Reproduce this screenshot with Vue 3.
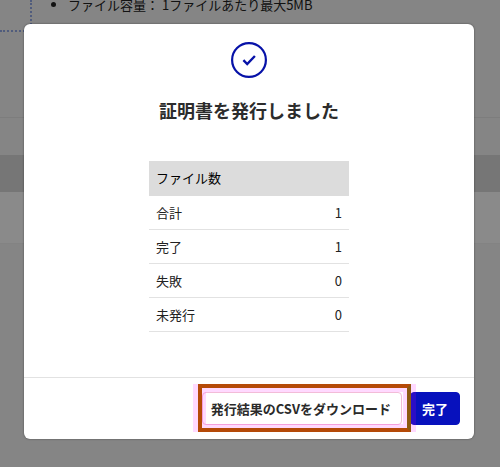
<script setup>
import {ref} from 'vue';

const title = ref('証明書を発行しました');
const isOpen = ref(true);
const rows = ref([
  {label: '合計', count: 1},
  {label: '完了', count: 1},
  {label: '失敗', count: 0},
  {label: '未発行', count: 0},
]);

// Save the result counts as a CSV file
const downloadCsv = () => {
  const csv = rows.value.map(row => `${row.label},${row.count}`).join('\n');
  const link = document.createElement('a');
  link.href = URL.createObjectURL(new Blob([csv], {type: 'text/csv'}));
  link.download = 'result.csv';
  link.click();
  URL.revokeObjectURL(link.href);
};

const closeModal = () => {
  isOpen.value = false
};
</script>

<template>
  <div class="page">
    <div class="upload">
      <div class="drop-area"></div>
      <ul class="hints">
        <li>ファイル容量： 1ファイルあたり最大5MB</li>
      </ul>
    </div>
    <div class="toolbar"></div>
    <div class="list-head"></div>
    <div class="list-row"></div>
  </div>

  <div class="overlay" v-if="isOpen">
    <div class="modal" role="dialog" aria-modal="true" aria-labelledby="modal-title">
      <div class="modal-body">
        <svg class="check" viewBox="0 0 36 36" fill="none" aria-hidden="true">
          <circle cx="18" cy="18" r="16.9" stroke="currentColor" stroke-width="2.2"/>
          <path d="M12.4 18.2l3.8 3.8 7.7-8" stroke="currentColor" stroke-width="2.4"/>
        </svg>
        <h1 id="modal-title">{{ title }}</h1>
        <table>
          <thead>
            <tr>
              <th colspan="2">ファイル数</th>
            </tr>
          </thead>
          <tbody>
            <tr v-for="row in rows" :key="row.label">
              <td>{{ row.label }}</td>
              <td class="count">{{ row.count }}</td>
            </tr>
          </tbody>
        </table>
      </div>
      <div class="modal-footer">
        <div class="highlight">
          <button type="button"
                  class="btn download"
                  @click="downloadCsv">発行結果のCSVをダウンロード</button>
        </div>
        <button type="button"
                class="btn primary"
                @click="closeModal">完了</button>
      </div>
    </div>
  </div>
</template>

<style>
  body {
    background-color: #f3f3f3;
  }
</style>

<style scoped>
  .page, .overlay {
    font-family: "Noto Sans CJK JP", "Noto Sans", sans-serif;
    font-size: 13px;
    line-height: 20px;
    color: #222;
  }

  .page {
    min-height: 100vh;
    background-color: #f3f3f3;
  }

  .upload {
    display: flex;
    align-items: flex-start;
    height: 117px;
  }

  .drop-area {
    box-sizing: border-box;
    width: 32px;
    height: 32px;
    border-right: 2px dotted #92a8e4;
    border-bottom: 2px dotted #92a8e4;
  }

  .hints {
    margin: -5px 0 0;
    padding-left: 36px;
  }

  .toolbar {
    height: 37px;
    border-top: 1px solid #e4e4e4;
  }

  .list-head {
    height: 37px;
    background-color: #d8d8d8;
  }

  .list-row {
    height: 51px;
    background-color: #fcfcfc;
    border-bottom: 1px solid #eee;
  }

  .overlay {
    box-sizing: border-box;
    position: absolute;
    top: 0;
    left: 0;
    width: 100%;
    min-height: 100vh;
    padding: 24px 26px 27px 24px;
    background-color: rgba(0, 0, 0, 0.45);
  }

  .modal {
    background-color: #fff;
    border-radius: 6px;
    box-shadow: 0 0 2px rgba(0, 0, 0, 0.5);
  }

  .modal-body {
    display: flex;
    flex-direction: column;
    align-items: center;
    padding: 18px 16px 45px;
  }

  .check {
    width: 36px;
    height: 36px;
    color: #0712a8;
  }

  h1 {
    margin: 20px 0 39px;
    font-size: 18px;
    line-height: 24px;
    font-weight: 700;
    color: #2c2c2c;
  }

  table {
    width: 200px;
    border-collapse: separate;
    border-spacing: 0;
  }

  th, td {
    box-sizing: border-box;
    height: 34px;
    padding: 0 7px;
    text-align: left;
    border-bottom: 1px solid #e2e2e2;
  }

  th {
    height: 35px;
    padding-bottom: 2px;
    font-weight: 400;
    color: #000;
    background-color: #dcdcdc;
    border-bottom: none;
  }

  td.count {
    text-align: right;
  }

  .modal-footer {
    display: flex;
    justify-content: flex-end;
    gap: 8px;
    padding: 14px;
    border-top: 1px solid #e2e2e2;
  }

  .btn {
    box-sizing: border-box;
    height: 33px;
    padding: 0 11px;
    font-family: inherit;
    font-size: 13px;
    font-weight: 700;
    color: #2a2a2a;
    background-color: #fff;
    border: 1px solid #f3bcd8;
    border-radius: 4px;
    cursor: pointer;
  }

  .btn.download {
    padding: 0 10px 0 8px;
  }

  .btn.primary {
    color: #fff;
    background-color: #0711bd;
    border-color: #0711bd;
  }

  .highlight {
    position: relative;
  }

  /* frame drawn around the download button */
  .highlight::after {
    content: '';
    position: absolute;
    inset: -8px -9px -7px -4px;
    border: 4px solid #b54a08;
    border-right-color: #8c5912;
    box-shadow: 5px 0 0 rgba(255, 0, 255, 0.15),
      -5px 0 0 rgba(255, 0, 255, 0.15),
      inset 0 0 0 4px rgba(255, 0, 255, 0.15);
    pointer-events: none;
  }
</style>
